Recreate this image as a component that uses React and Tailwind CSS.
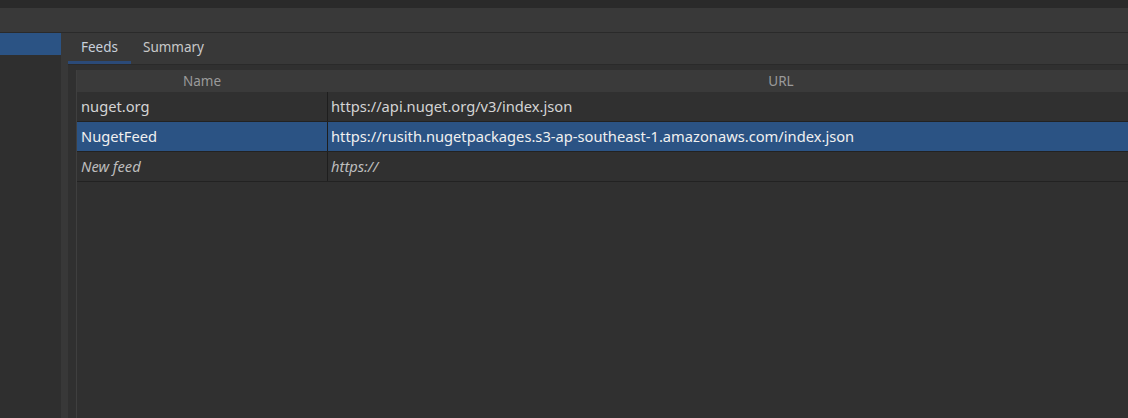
import React from 'react';

const rows = [
  { name: 'nuget.org', url: 'https://api.nuget.org/v3/index.json' },
  { name: 'NugetFeed', url: 'https://rusith.nugetpackages.s3-ap-southeast-1.amazonaws.com/index.json', selected: true },
  { name: 'New feed', url: 'https://', placeholder: true },
];

const App = () => {
  return (
    <div
      className="flex flex-col h-[418px] w-[1128px] overflow-hidden bg-[#303030] text-[14.7px] text-[#d4d4d4]"
      style={{ fontFamily: '"Noto Sans", "Open Sans", sans-serif' }}
    >
      {/* Title strip */}
      <div className="h-[8px] shrink-0 bg-[#2a2a2a]" />
      {/* Toolbar */}
      <div className="h-[25px] shrink-0 bg-[#393939] border-b border-[#2a2a2a]" />

      <div className="flex flex-1 overflow-hidden">
        {/* Sidebar */}
        <div className="w-[61px] shrink-0 bg-[#2f2f2f]">
          <div className="h-[22px] bg-[#2b5384]" />
        </div>
        {/* Splitter */}
        <div className="w-[7px] shrink-0 bg-[#383838]" />

        {/* Tabs panel */}
        <div className="flex flex-1 flex-col overflow-hidden">
          <div className="flex h-[32px] shrink-0 items-end bg-[#383838] border-b border-[#2a2a2a]">
            <div className="flex h-full w-[63px] flex-col">
              <div className="flex flex-1 items-center justify-center text-[13.5px] text-[#c8d0dc]">Feeds</div>
              <div className="h-[3px] bg-[#2b4a78]" />
            </div>
            <div className="flex h-full w-[85px] items-center justify-center pb-[3px] text-[13.5px] text-[#c8c8c8]">Summary</div>
          </div>

          <div className="flex flex-1 overflow-hidden pl-[8px] pt-[5px]">
            <div className="flex flex-1 flex-col overflow-hidden border-l border-[#3f3f3f]">
              {/* Header */}
              <div className="flex h-[22px] shrink-0 bg-[#3a3a3a] text-[13.5px] text-[#9a9a9a]">
                <div className="flex w-[250px] shrink-0 items-center justify-center">Name</div>
                <div className="my-[2px] w-px bg-[#4c4c4c]" />
                <div className="flex w-[908px] shrink-0 items-center justify-center">URL</div>
              </div>
              {rows.map((r) => (
                <div
                  key={r.name}
                  className={`flex h-[30px] shrink-0 border-b border-[#222222] ${r.selected ? 'bg-[#2b5384] text-[#f0f0f0]' : 'bg-[#303030]'}`}
                >
                  <div
                    className={`flex w-[251px] shrink-0 items-center border-r border-[#1e1e1e] pl-[4px] ${r.placeholder ? 'italic text-[#bdbdbd]' : ''}`}
                  >
                    {r.name}
                  </div>
                  <div className={`flex w-[908px] shrink-0 items-center pl-[3px] ${r.placeholder ? 'italic text-[#bdbdbd]' : ''}`}>
                    {r.url}
                  </div>
                </div>
              ))}
            </div>
          </div>
        </div>
      </div>
    </div>
  );
};

export default App;
